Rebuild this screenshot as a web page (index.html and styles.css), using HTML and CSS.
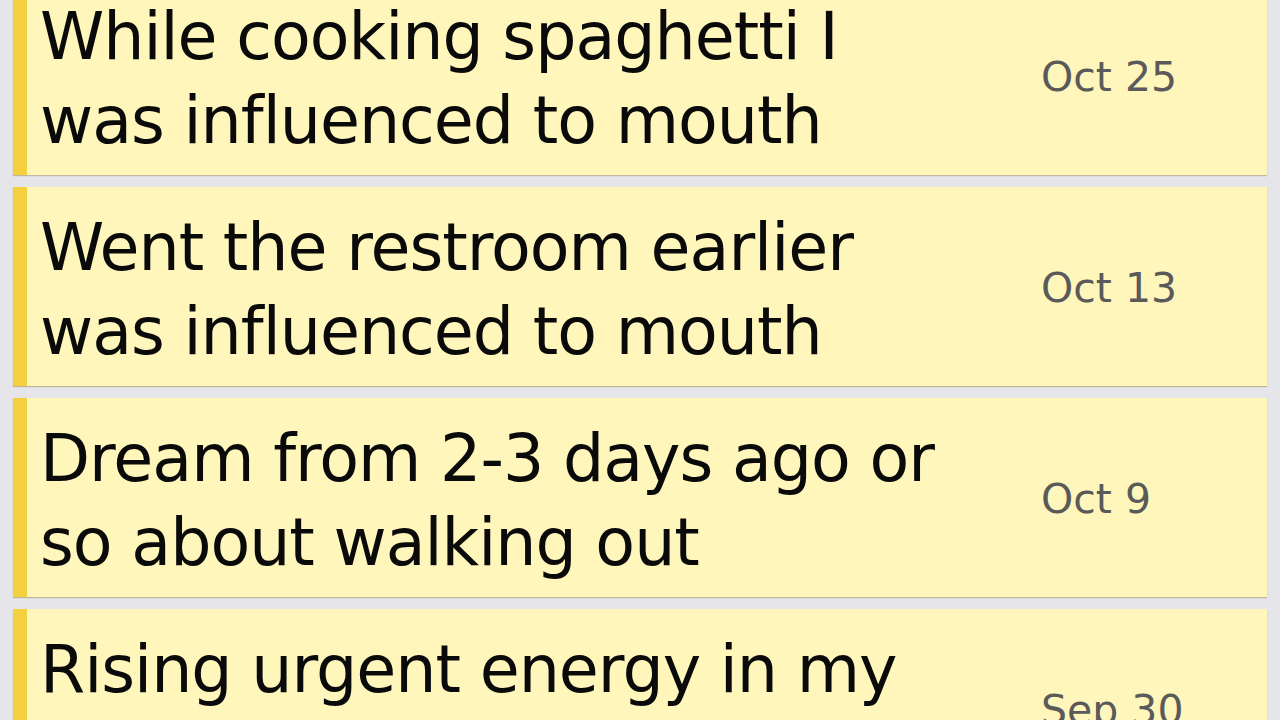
FILE: index.html
```html
<!DOCTYPE html>
<html>

<head>
    <title>Journal</title>
    <link rel="stylesheet" href="styles.css">
</head>

<body>
    <div class="entry-list">
        <div class="entry">
            <div class="entry-title">While cooking spaghetti I was influenced to mouth</div>
            <div class="entry-date">Oct 25</div>
        </div>
        <div class="entry">
            <div class="entry-title">Went the restroom earlier was influenced to mouth</div>
            <div class="entry-date">Oct 13</div>
        </div>
        <div class="entry">
            <div class="entry-title">Dream from 2-3 days ago or so about walking out</div>
            <div class="entry-date">Oct 9</div>
        </div>
        <div class="entry">
            <div class="entry-title">Rising urgent energy in my</div>
            <div class="entry-date">Sep 30</div>
        </div>
    </div>
</body>

</html>
```

FILE: styles.css
```css
body {
    margin: 0;
    background-color: #e6e5e9;
    font-family: "DejaVu Sans", sans-serif;
    overflow: hidden;
}

.entry-list {
    display: flex;
    flex-direction: column;
    gap: 12px;
    margin-top: -24px;
    padding: 0 13px;
}

.entry {
    display: grid;
    grid-template-columns: 1fr 224px;
    align-items: center;
    height: 199px;
    box-sizing: border-box;
    padding: 19px 0 12px 0;
    background-color: #fff6bb;
    border-left: 14px solid #f4d03f;
    box-shadow: 0 1px 1px rgba(120, 100, 20, 0.35);
}

.entry-title {
    height: 168px;
    overflow: hidden;
    padding: 0 66px 0 13px;
    font-size: 65px;
    line-height: 84px;
    letter-spacing: -1px;
    color: #0a0a0a;
}

.entry-date {
    margin-left: -2px;
    margin-top: -4px;
    font-size: 41px;
    color: #5a5a5a;
}
```
